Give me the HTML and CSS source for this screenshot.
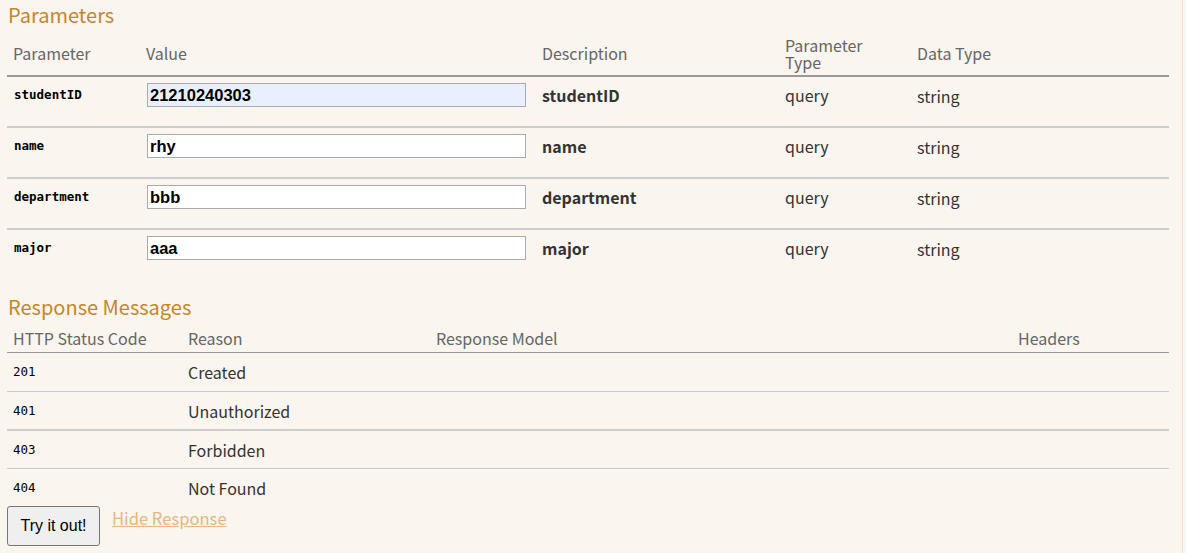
FILE: index.html
```html
<!DOCTYPE html>
<html lang="en">
<head>
<meta charset="utf-8">
<title>Operation</title>
<link rel="stylesheet" href="styles.css">
</head>
<body>
<div class="content">
  <h4 class="section-title">Parameters</h4>
  <table class="params">
    <colgroup>
      <col class="c-param"><col class="c-value"><col class="c-desc"><col class="c-ptype"><col class="c-dtype">
    </colgroup>
    <thead>
      <tr><th>Parameter</th><th>Value</th><th>Description</th><th>Parameter<br>Type</th><th>Data Type</th></tr>
    </thead>
    <tbody>
      <tr>
        <td class="code">studentID</td>
        <td><input class="parameter autofill" type="text" value="21210240303"></td>
        <td class="markdown">studentID</td>
        <td>query</td>
        <td class="dtype">string</td>
      </tr>
      <tr>
        <td class="code">name</td>
        <td><input class="parameter" type="text" value="rhy"></td>
        <td class="markdown">name</td>
        <td>query</td>
        <td class="dtype">string</td>
      </tr>
      <tr>
        <td class="code">department</td>
        <td><input class="parameter" type="text" value="bbb"></td>
        <td class="markdown">department</td>
        <td>query</td>
        <td class="dtype">string</td>
      </tr>
      <tr>
        <td class="code">major</td>
        <td><input class="parameter" type="text" value="aaa"></td>
        <td class="markdown">major</td>
        <td>query</td>
        <td class="dtype">string</td>
      </tr>
    </tbody>
  </table>

  <h4 class="section-title resp-title">Response Messages</h4>
  <table class="responses">
    <colgroup>
      <col class="r-code"><col class="r-reason"><col class="r-model"><col class="r-headers">
    </colgroup>
    <thead>
      <tr><th>HTTP Status Code</th><th>Reason</th><th>Response Model</th><th>Headers</th></tr>
    </thead>
    <tbody>
      <tr><td class="status">201</td><td>Created</td><td></td><td></td></tr>
      <tr class="thick"><td class="status">401</td><td>Unauthorized</td><td></td><td></td></tr>
      <tr class="short"><td class="status">403</td><td>Forbidden</td><td></td><td></td></tr>
      <tr><td class="status">404</td><td>Not Found</td><td></td><td></td></tr>
    </tbody>
  </table>

  <div class="sandbox-header">
    <button class="submit" type="button">Try it out!</button>
    <a class="response-toggle" href="#">Hide Response</a>
  </div>
</div>
</body>
</html>
```

FILE: styles.css
```css
html, body {
  margin: 0;
  padding: 0;
  background: #faf5ee;
}

body {
  margin-right: 3px;
  height: 553px;
  overflow: hidden;
  font-family: "Noto Sans CJK SC", "Noto Sans", sans-serif;
  color: #333;
}

.content {
  padding: 0 13px 8px 7px;
  border-right: 1px solid #f0e0ca;
  height: 553px;
  box-sizing: border-box;
}

.section-title {
  margin: 0;
  padding: 3px 0 6px 1px;
  font-size: 20px;
  line-height: 24px;
  font-weight: normal;
  color: #c5862b;
}

.resp-title {
  padding-top: 16px;
  padding-bottom: 6px;
}

table {
  width: 100%;
  border-collapse: collapse;
  table-layout: fixed;
}

th {
  text-align: left;
  font-weight: normal;
  color: #666;
  font-size: 16px;
  padding: 4px 6px 5px;
  vertical-align: middle;
}

.params th {
  line-height: 17px;
  border-bottom: 2px solid #999;
}

.params th:nth-child(4) {
  line-height: 16.5px;
}

.responses th {
  padding: 5px 6px;
  line-height: 17px;
  border-bottom: 1px solid #999;
}

.c-param { width: 133px; }
.c-value { width: 396px; }
.c-desc { width: 243px; }
.c-ptype { width: 132px; }

.r-code { width: 175px; }
.r-reason { width: 248px; }
.r-headers { width: 157px; }

td {
  vertical-align: top;
  font-size: 16px;
}

.params td {
  padding: 6px 6px 18px;
  line-height: 24px;
  height: 24px;
  border-bottom: 2px solid #ccc;
}

.params tbody tr:last-child td {
  border-bottom: none;
}

.params td.code {
  padding-left: 7px;
  padding-top: 7px;
  font-family: "DejaVu Sans Mono", "Liberation Mono", monospace;
  font-weight: bold;
  font-size: 12.5px;
  line-height: 22px;
  color: #000;
}

.params td.markdown {
  font-weight: bold;
  color: #333;
}

.params td.dtype {
  padding-top: 7px;
}

input.parameter {
  display: block;
  box-sizing: border-box;
  width: 379px;
  height: 24px;
  margin: 0 0 0 1px;
  padding: 0 2px;
  border: 1px solid #aaa;
  background: #fff;
  font-family: "Liberation Sans", Arial, sans-serif;
  font-weight: bold;
  font-size: 16.5px;
  color: #000;
}

input.parameter.autofill {
  background: #e8f0fe;
}

.responses td {
  padding: 9px 6px;
  line-height: 20px;
  height: 20px;
  border-bottom: 1px solid #ccc;
  color: #333;
}

.responses tr.thick td {
  border-bottom-width: 2px;
  padding-bottom: 8px;
}

.responses tr.short td {
  padding-bottom: 8px;
}

.responses tbody tr:last-child td {
  border-bottom: none;
  padding-bottom: 8px;
}

.responses td.status {
  font-family: "DejaVu Sans Mono", "Liberation Mono", monospace;
  font-size: 12.5px;
  color: #000;
}

.sandbox-header {
  display: flex;
  align-items: flex-start;
  gap: 12px;
}

button.submit {
  box-sizing: border-box;
  width: 93px;
  height: 40px;
  padding: 0;
  margin: 0;
  border: 1px solid #767676;
  border-radius: 3px;
  background: #efefef;
  font-family: "Liberation Sans", Arial, sans-serif;
  font-size: 16px;
  color: #000;
}

a.response-toggle {
  margin-top: 1px;
  font-size: 16.6px;
  line-height: 22px;
  color: #e3b77f;
  text-decoration: underline;
}
```
